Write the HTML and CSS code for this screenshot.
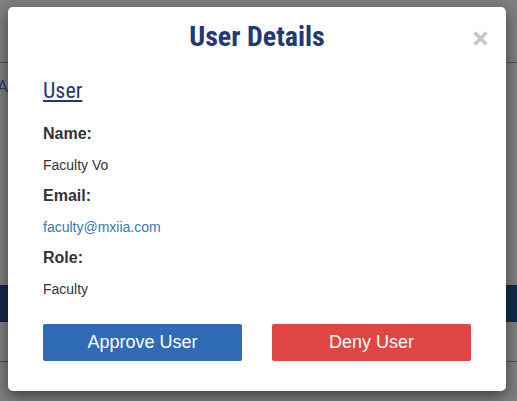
FILE: index.html
```html
<!DOCTYPE html>
<html lang="en">
<head>
<meta charset="utf-8">
<title>User Details</title>
<link rel="stylesheet" href="styles.css">
</head>
<body>
<div class="page">
  <div class="page-rule page-rule-top"></div>
  <div class="page-link">A</div>
  <div class="page-band"></div>
  <div class="page-rule page-rule-bottom"></div>
</div>
<div class="backdrop"></div>
<div class="modal">
  <button class="close" aria-label="Close">
    <svg width="15" height="15" viewBox="0 0 15 15"><path d="M1.6 1.6 L13.4 13.4 M13.4 1.6 L1.6 13.4" stroke="#c8c8c8" stroke-width="3.6" stroke-linecap="butt" fill="none"/></svg>
  </button>
  <h1 class="title">User Details</h1>
  <h2 class="section">User</h2>
  <div class="field-label">Name:</div>
  <div class="field-value">Faculty Vo</div>
  <div class="field-label">Email:</div>
  <div class="field-value"><a class="link" href="#">faculty@mxiia.com</a></div>
  <div class="field-label">Role:</div>
  <div class="field-value">Faculty</div>
  <div class="actions">
    <button class="btn btn-approve">Approve User</button>
    <button class="btn btn-deny">Deny User</button>
  </div>
</div>
</body>
</html>
```
FILE: styles.css
```css
html, body {
  margin: 0;
  padding: 0;
}
body {
  width: 517px;
  height: 401px;
  overflow: hidden;
  position: relative;
  background: #ffffff;
  font-family: "Liberation Sans", Arial, sans-serif;
  color: #333333;
}
.page {
  position: absolute;
  inset: 0;
}
.page-rule {
  position: absolute;
  left: 0;
  right: 0;
  height: 1px;
}
.page-rule-top {
  top: 62px;
  background: #9aa0c4;
}
.page-rule-bottom {
  top: 361px;
  background: #9e9e9e;
}
.page-link {
  position: absolute;
  left: -3px;
  top: 76px;
  font-family: Roboto, sans-serif;
  font-size: 17px;
  color: #4a8ae8;
}
.page-band {
  position: absolute;
  left: 0;
  right: 0;
  top: 285px;
  height: 37px;
  background: #265294;
}
.backdrop {
  position: absolute;
  inset: 0;
  background: rgba(0, 0, 0, 0.5);
}
.modal {
  position: absolute;
  left: 8px;
  top: 7px;
  width: 498px;
  height: 384px;
  box-sizing: border-box;
  padding: 13px 35px 0 35px;
  background: #ffffff;
  border-radius: 5px;
  box-shadow: 0 5px 15px rgba(0, 0, 0, 0.5);
}
.close {
  position: absolute;
  top: 24px;
  right: 18px;
  padding: 0;
  margin: 0;
  border: 0;
  background: transparent;
  width: 15px;
  height: 15px;
  display: block;
}
.close svg {
  display: block;
}
.title {
  margin: 0;
  text-align: center;
  font-family: Roboto, sans-serif;
  font-stretch: 83%;
  font-weight: 700;
  font-size: 28px;
  line-height: 34px;
  color: #233876;
}
.section {
  margin: 24px 0 20px 0;
  font-family: Roboto, sans-serif;
  font-stretch: 83%;
  font-weight: 400;
  font-size: 22px;
  line-height: 26px;
  color: #233876;
  text-decoration: underline;
  text-decoration-thickness: 2px;
  text-underline-offset: 2px;
}
.field-label {
  font-weight: 700;
  font-size: 16px;
  line-height: 20px;
  margin-bottom: 11px;
  color: #333333;
}
.field-value {
  font-size: 14px;
  line-height: 20px;
  margin-bottom: 11px;
  color: #333333;
}
.link {
  color: #337ab7;
  text-decoration: none;
}
.actions {
  display: flex;
  gap: 30px;
  margin-top: 25px;
}
.btn {
  flex: 1;
  height: 37px;
  border: 0;
  border-radius: 2px;
  font-family: "Liberation Sans", Arial, sans-serif;
  font-size: 18px;
  color: #ffffff;
  padding: 0;
}
.btn-approve {
  background: #306bb8;
}
.btn-deny {
  background: #e04546;
}
```
